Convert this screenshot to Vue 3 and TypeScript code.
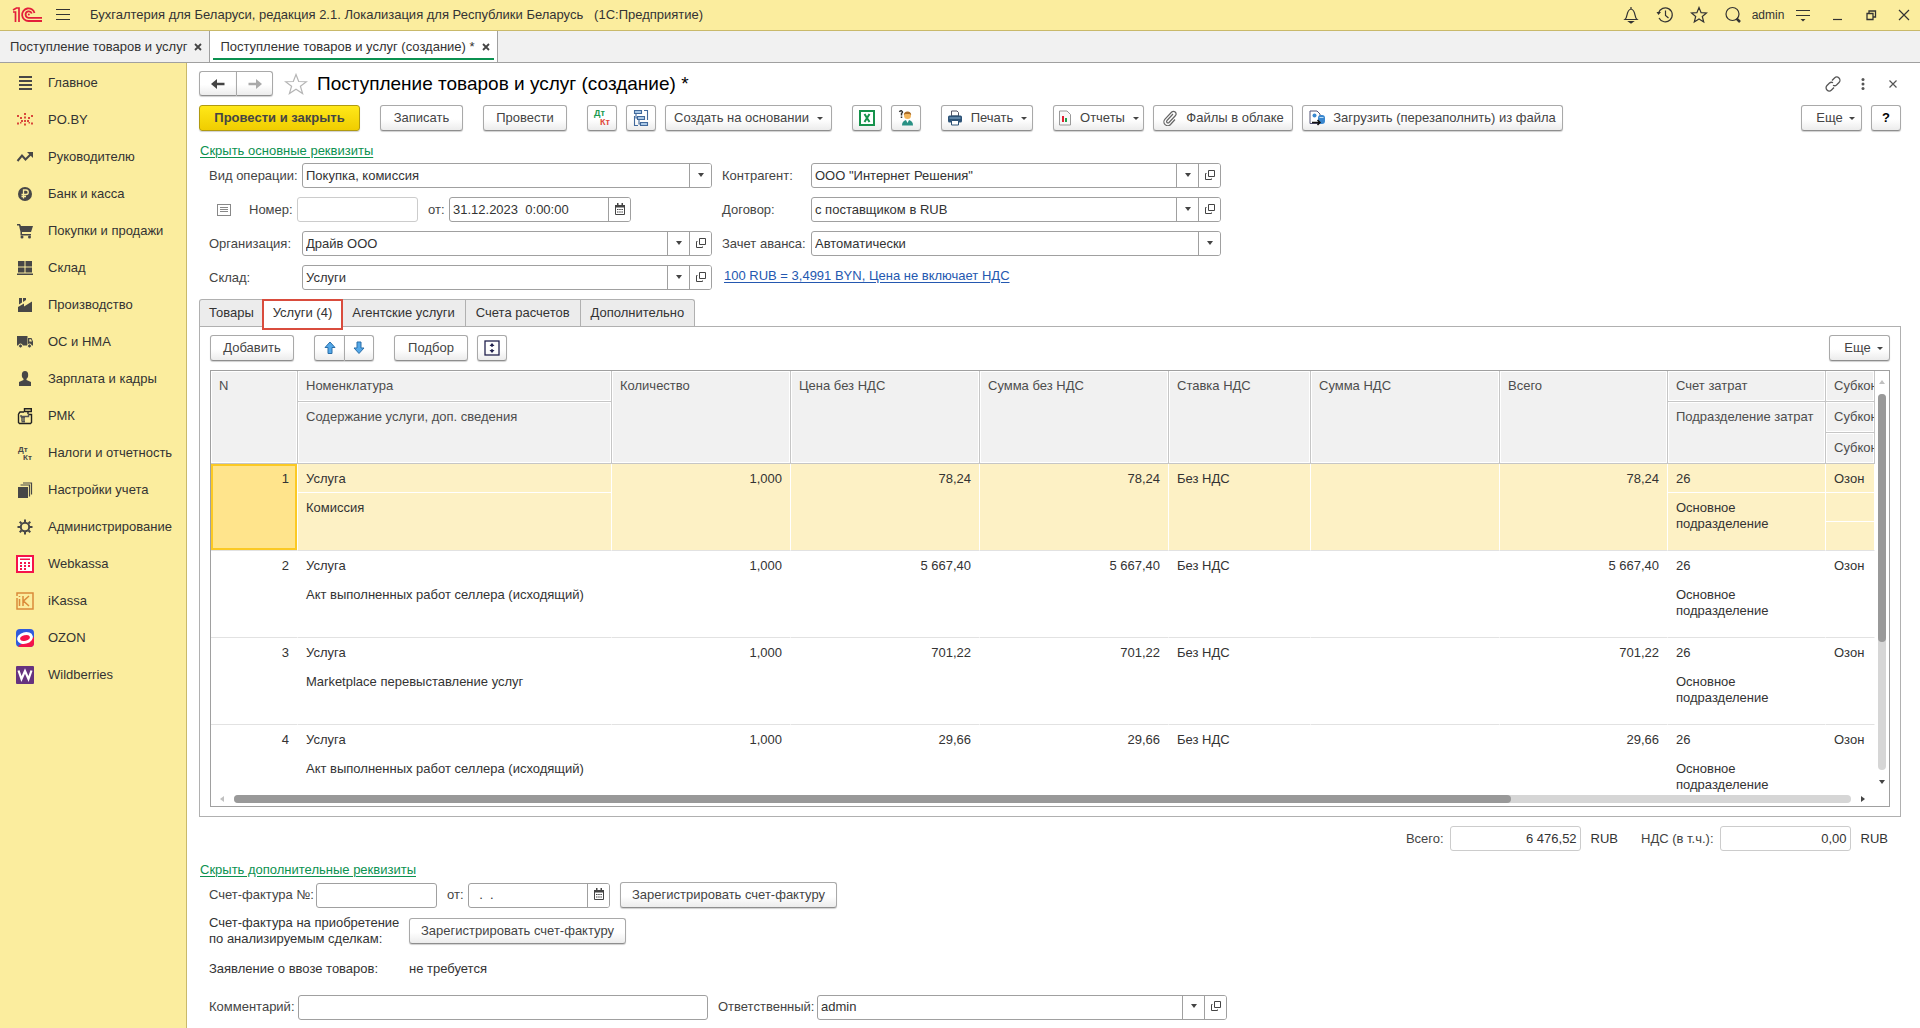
<script setup lang="ts">
import { ref } from 'vue'

interface MenuItem { id: string; text: string }
interface Line {
  n: number; item: string; note: string; qty: string; price: string; sum: string
  rate: string; tax: string; total: string; account: string; unit: string; sub: string
}

const menu: MenuItem[] = [
  { id: 'main', text: 'Главное' },
  { id: 'poby', text: 'PO.BY' },
  { id: 'chart', text: 'Руководителю' },
  { id: 'bank', text: 'Банк и касса' },
  { id: 'cart', text: 'Покупки и продажи' },
  { id: 'store', text: 'Склад' },
  { id: 'factory', text: 'Производство' },
  { id: 'truck', text: 'ОС и НМА' },
  { id: 'person', text: 'Зарплата и кадры' },
  { id: 'rmk', text: 'РМК' },
  { id: 'tax', text: 'Налоги и отчетность' },
  { id: 'books', text: 'Настройки учета' },
  { id: 'gear', text: 'Администрирование' },
  { id: 'webkassa', text: 'Webkassa' },
  { id: 'ikassa', text: 'iKassa' },
  { id: 'ozon', text: 'OZON' },
  { id: 'wb', text: 'Wildberries' },
]

const tabs = ['Товары', 'Услуги (4)', 'Агентские услуги', 'Счета расчетов', 'Дополнительно']
const activeTab = ref(1)
const selected = ref(1)

function line(n: number, note: string, amount: string): Line {
  return {
    n, item: 'Услуга', note, qty: '1,000', price: amount, sum: amount, rate: 'Без НДС',
    tax: '', total: amount, account: '26', unit: 'Основное подразделение', sub: 'Озон',
  }
}
const lines: Line[] = [
  line(1, 'Комиссия', '78,24'),
  line(2, 'Акт выполненных работ селлера (исходящий)', '5 667,40'),
  line(3, 'Marketplace перевыставление услуг', '701,22'),
  line(4, 'Акт выполненных работ селлера (исходящий)', '29,66'),
]
const middleHeads = ['Количество', 'Цена без НДС', 'Сумма без НДС', 'Ставка НДС', 'Сумма НДС', 'Всего']

const form = ref({
  operation: 'Покупка, комиссия',
  number: '',
  date: '31.12.2023  0:00:00',
  org: 'Драйв ООО',
  store: 'Услуги',
  partner: 'ООО "Интернет Решения"',
  contract: 'с поставщиком в RUB',
  advance: 'Автоматически',
  total: '6 476,52',
  vat: '0,00',
  invoice: '',
  invoiceDate: '  .  .',
  comment: '',
  owner: 'admin',
})
</script>

<template>
  <div class="app">
    <header class="titlebar">
      <svg class="logo" width="30" height="18" viewBox="0 0 30 18" fill="none" stroke="#e31e3a" stroke-width="1.800">
        <path d="M1 6H3.500V16M1 4L4.500 2H7V16" stroke-width="1.700" />
        <path d="M22.500 7A6.300 6.300 0 1 0 16.500 15H30M19.800 7.500A3.200 3.200 0 1 0 16.500 11.800H30" />
        <circle cx="16.800" cy="8.500" r="1" fill="#e31e3a" stroke="none" />
      </svg>
      <button class="plain" aria-label="Меню">
        <svg width="16" height="16" viewBox="0 0 16 16" stroke="#333" stroke-width="1.200"><path d="M1 2.500H15M1 7.500H15M1 12.500H15" /></svg>
      </button>
      <span class="apptitle">Бухгалтерия для Беларуси, редакция 2.1. Локализация для Республики Беларусь &nbsp; (1С:Предприятие)</span>
      <div class="tools">
        <button class="plain" aria-label="Уведомления"><svg width="16" height="18" viewBox="0 0 16 18" fill="none" stroke="#333" stroke-width="1.200"><path d="M8 1V3M2 13.500C5 11 3 4 8 3C13 4 11 11 14 13.500Z" /><path d="M6 15.500H10L8 17Z" fill="#333" /></svg></button>
        <button class="plain" aria-label="История"><svg width="18" height="18" viewBox="0 0 18 18" fill="none" stroke="#333" stroke-width="1.200"><path d="M3 12A7 7 0 1 0 2.500 7M9.500 4.500V9.500L12.500 12" /><path d="M.5 6H5L2.500 9Z" fill="#333" stroke="none" /></svg></button>
        <button class="plain" aria-label="Избранное"><svg width="18" height="18" viewBox="0 0 18 18" fill="none" stroke="#333" stroke-width="1.200"><path d="M9 1.500L11.100 6.700L16.500 7L12.300 10.500L13.700 16L9 13L4.300 16L5.700 10.500L1.500 7L6.900 6.700Z" /></svg></button>
        <button class="plain" aria-label="Поиск"><svg width="18" height="18" viewBox="0 0 18 18" fill="none" stroke="#333"><circle cx="8.500" cy="8" r="6.500" stroke-width="1.200" /><path d="M12.500 12.500L16 16" stroke-width="2.500" /></svg></button>
        <span class="user">admin</span>
        <button class="plain" aria-label="Сервис"><svg width="16" height="16" viewBox="0 0 16 16" stroke="#333" stroke-width="1.200"><path d="M1 3.500H15M1 8.500H15" /><path d="M5.500 12H10.500L8 14.500Z" fill="#333" stroke="none" /></svg></button>
        <button class="plain" aria-label="Свернуть"><svg width="12" height="12" viewBox="0 0 12 12" stroke="#333"><path d="M2 10.500H11" stroke-width="1.200" /></svg></button>
        <button class="plain" aria-label="Развернуть"><svg width="12" height="12" viewBox="0 0 12 12" fill="none" stroke="#333" stroke-width="1.300"><path d="M2 4.500H8V10.500H2ZM4 4V2H10.500V8H8.500" /></svg></button>
        <button class="plain close" aria-label="Закрыть"><svg width="12" height="12" viewBox="0 0 12 12" stroke="#333" stroke-width="1.200"><path d="M1 1L11 11M11 1L1 11" /></svg></button>
      </div>
    </header>

    <nav class="windows">
      <div class="wtab"><a href="#list">Поступление товаров и услуг</a><button class="plain" aria-label="Закрыть вкладку"><svg width="8" height="8" viewBox="0 0 8 8" stroke="#444" stroke-width="1.800"><path d="M1 1L7 7M7 1L1 7" /></svg></button></div>
      <div class="wtab current"><a href="#new">Поступление товаров и услуг (создание) *</a><button class="plain" aria-label="Закрыть вкладку"><svg width="8" height="8" viewBox="0 0 8 8" stroke="#444" stroke-width="1.800"><path d="M1 1L7 7M7 1L1 7" /></svg></button></div>
    </nav>

    <div class="body">
      <aside class="sidebar">
        <a v-for="m in menu" :key="m.id" class="mitem" :href="'#' + m.id">
          <svg width="18" height="18" viewBox="0 0 18 18" fill="#474747">
            <path v-if="m.id === 'main'" d="M3 2H16V4H3ZM3 6H16V8H3ZM3 10H16V12H3ZM3 14H16V16H3Z" />
            <path v-else-if="m.id === 'poby'" fill="#d9483b" d="M8 2h2v2H8zM8 5.500h2v2H8zM8 9h2v2H8zM8 12.500h2v2H8zM1 4h2v2H1zM4 6h2v2H4zM12 6h2v2h-2zM15 4h2v2h-2zM5 9h2v2H5zM11 9h2v2h-2zM1 11.500h2v2H1zM4 11h1.500v1.500H4zM12.500 11H14v1.500h-1.500zM15 11.500h2v2h-2z" />
            <g v-else-if="m.id === 'chart'"><path d="M1.500 13L6 7.500L9.500 11.500L14.500 6.500" fill="none" stroke="#474747" stroke-width="2" /><path d="M11 4H17V10Z" /></g>
            <g v-else-if="m.id === 'bank'"><circle cx="9" cy="9" r="7" /><path d="M7.500 13.500V5H10A2.200 2.200 0 0 1 10 9.500H5.500M5.500 11.500H10" fill="none" stroke="#fbed9e" stroke-width="1.300" /></g>
            <g v-else-if="m.id === 'cart'"><path d="M1 2H4L5 4H17L15 10H6L6 12H15V13.500H4.500L4.500 10L3 3.500H1Z" /><circle cx="6" cy="15" r="1.500" /><circle cx="13.500" cy="15" r="1.500" /></g>
            <path v-else-if="m.id === 'store'" d="M2 2H8.500V7.500H2ZM9.500 2H16V7.500H9.500ZM2 8.500H8.500V13.500H2ZM9.500 8.500H16V13.500H9.500ZM1 14.500H17V16H1Z" />
            <path v-else-if="m.id === 'factory'" d="M2 16V11L8 7.500V10.500L16 5.500V16ZM3 2H6V6.500L3 8.500ZM7 2H10V4L7 6Z" />
            <g v-else-if="m.id === 'truck'"><path d="M1 3H11.500V12.500H1ZM12 5H15.500L17 8.500V12.500H12Z" /><path d="M13.300 6.200H15L16 8.500H13.300Z" fill="#fbed9e" /><circle cx="4.500" cy="13" r="2" stroke="#fbed9e" /><circle cx="13.500" cy="13" r="2" stroke="#fbed9e" /></g>
            <g v-else-if="m.id === 'person'"><ellipse cx="9" cy="5" rx="3.200" ry="4" /><path d="M7.500 8H10.500V10L15 12V16H3V12L7.500 10Z" /></g>
            <g v-else-if="m.id === 'rmk'" fill="none" stroke="#222" stroke-width="1.400"><path d="M2.500 7V15.500L3.500 16.500H14.500L15.500 15.500V7.500H13M2.500 7L4 5H8" /><path d="M8.500 1.700H15.300V4.500H8.500ZM12 4.500V7" /><path d="M5 8V9.500H12.500V7M5 11H9M5 13H9M5.500 14.800H9" stroke="#555" /></g>
            <g v-else-if="m.id === 'tax'" font-size="8" font-weight="700" font-family="Liberation Sans, Arial, sans-serif"><text x="2" y="8">Дт</text><text x="7" y="16">Кт</text></g>
            <g v-else-if="m.id === 'books'"><path d="M2 6H12V17H2Z" /><path d="M4.500 4H13.500V15.500M7 2H15.500V13.500" fill="none" stroke="#474747" stroke-width="1.200" /></g>
            <g v-else-if="m.id === 'gear'" fill="none" stroke="#474747"><circle cx="9" cy="9" r="4.200" stroke-width="2" /><path d="M9 1.500V4M9 14V16.500M1.500 9H4M14 9H16.500M3.700 3.700L5.500 5.500M12.500 12.500L14.300 14.300M14.300 3.700L12.500 5.500M5.500 12.500L3.700 14.300" stroke-width="2" /></g>
            <g v-else-if="m.id === 'webkassa'"><path d="M0 0H18V18H0Z" fill="#f5134a" /><path d="M2 2H16V16H2Z" fill="#fff" /><path d="M4 3.500H14V5H4ZM4 7h2v2H4zM8 7h2v2H8zM12 7h2v2h-2zM4 10h2v2H4zM8 10h2v2H8zM12 10h2v2h-2zM4 13h2v2H4zM8 13h2v2H8z" fill="#f5134a" /></g>
            <g v-else-if="m.id === 'ikassa'" fill="none" stroke="#da8b3a" stroke-width="1.500"><path d="M1 4V1H17V17H1V6M3.500 4V5M3.500 7V14M7 4V14M13 4L7.500 9L13 14" /></g>
            <g v-else-if="m.id === 'ozon'"><rect width="18" height="18" rx="4" fill="#2f5bdc" /><path d="M18 8V14A4 4 0 0 1 14 18H4A4 4 0 0 1 2 17Z" fill="#f5134a" /><ellipse cx="9" cy="9" rx="8" ry="5.800" fill="#fff" transform="rotate(-15 9 9)" /><ellipse cx="9" cy="9" rx="5" ry="2.800" fill="#f5134a" transform="rotate(-15 9 9)" /></g>
            <g v-else><rect width="18" height="18" rx="1" fill="#65337f" /><path d="M2.500 4.500L5.500 13L9 5L12.500 13L15.500 4.500" fill="none" stroke="#fff" stroke-width="2.200" /></g>
          </svg>
          <span>{{ m.text }}</span>
        </a>
      </aside>

      <main class="content">
        <div class="head">
          <div class="pair">
            <button class="btn" aria-label="Назад"><svg width="14" height="12" viewBox="0 0 14 12"><path d="M4 6H13.500" stroke="#444" stroke-width="2.500" /><path d="M0 6L6 1V11Z" fill="#444" /></svg></button>
            <button class="btn" aria-label="Вперед"><svg width="14" height="12" viewBox="0 0 14 12"><path d="M.5 6H10" stroke="#aaa" stroke-width="2.500" /><path d="M14 6L8 1V11Z" fill="#aaa" /></svg></button>
          </div>
          <button class="plain star" aria-label="В избранное"><svg width="24" height="22" viewBox="0 0 24 22" fill="none" stroke="#b5b5b5" stroke-width="1.200"><path d="M12 1.500L14.700 8.500L22.500 8.700L16.400 13.300L18.600 20.500L12 16.300L5.400 20.500L7.600 13.300L1.500 8.700L9.300 8.500Z" /></svg></button>
          <h1>Поступление товаров и услуг (создание) *</h1>
          <div class="headtools">
            <button class="plain" aria-label="Ссылка"><svg width="16" height="16" viewBox="0 0 16 16" fill="none" stroke="#555" stroke-width="1.300"><path d="M7 4.500L9.500 2A3 3 0 0 1 14 6.500L11.500 9A3 3 0 0 1 8 9.200M9 11.500L6.500 14A3 3 0 0 1 2 9.500L4.500 7A3 3 0 0 1 8 6.800" /></svg></button>
            <button class="plain" aria-label="Еще"><svg width="16" height="16" viewBox="0 0 16 16" fill="#555"><circle cx="8" cy="3.500" r="1.500" /><circle cx="8" cy="8" r="1.500" /><circle cx="8" cy="12.500" r="1.500" /></svg></button>
            <button class="plain" aria-label="Закрыть форму"><svg width="16" height="16" viewBox="0 0 16 16" stroke="#555" stroke-width="1.200"><path d="M4.500 4.500L11.500 11.500M11.500 4.500L4.500 11.500" /></svg></button>
          </div>
        </div>

        <div class="toolbar">
          <button class="btn main w161">Провести и закрыть</button>
          <button class="btn w83 g20">Записать</button>
          <button class="btn w84 g20">Провести</button>
          <button class="btn w30 g20" aria-label="Дт Кт"><svg width="22" height="20" viewBox="0 0 22 20" font-family="Liberation Sans, Arial, sans-serif" font-size="9" font-weight="700"><text x="3" y="8" fill="#1a9a50">Дт</text><text x="9" y="17" fill="#e04a3a">Кт</text></svg></button>
          <button class="btn w30 g9" aria-label="Структура подчиненности"><svg width="20" height="20" viewBox="0 0 20 20" fill="#a9c8e6" stroke="#41699c" stroke-width="1.100"><path d="M3.500 2.500H10.500V5.500H3.500ZM6.500 8.500H13.500V11.500H6.500ZM9.500 14.500H16.500V17.500H9.500Z" /><path d="M5 5.500V10H6.500M8 11.500V16H9.500M13 2.500H16.500V12M3.500 8V17.500H7" fill="none" /></svg></button>
          <button class="btn w167 g9">Создать на основании<i class="car" /></button>
          <button class="btn w30 g20" aria-label="Excel"><svg width="16" height="16" viewBox="0 0 16 16"><path d="M1 1H15V15H1Z" fill="#fff" stroke="#16924b" stroke-width="2" /><path d="M5.500 4L10.500 12M10.500 4L5.500 12" stroke="#16924b" stroke-width="2" /></svg></button>
          <button class="btn w30 g9" aria-label="Вопрос"><svg width="18" height="18" viewBox="0 0 18 18"><path d="M2.500 3Q3 1.500 4.500 1.800Q6.500 3 4.500 4.500V6.500M4.500 7.500V9" fill="none" stroke="#333" stroke-width="1.500" /><circle cx="10.500" cy="6.500" r="3.500" fill="#f3b55c" /><path d="M6.800 6Q7 2.500 10.500 2.500Q14 2.500 14.200 6L12.500 5H8.500Z" fill="#a66a28" /><path d="M5 16.500Q5 11 10.500 11Q16 11 16 16.500Z" fill="#2a9184" /><path d="M9 11H12L10.500 14Z" fill="#fff" /></svg></button>
          <button class="btn w92 g20"><svg width="16" height="16" viewBox="0 0 16 16"><path d="M4.500 1H10L11.500 2.500V6H4.500Z" fill="#fff" stroke="#556" /><rect x="1" y="5.500" width="14" height="7" rx="1.500" fill="#2d5377" /><path d="M2.500 8H13.500" stroke="#8fb4d6" /><path d="M4.500 10.500H11.500V15H4.500Z" fill="#fff" stroke="#2d5377" /></svg><span>Печать</span><i class="car" /></button>
          <button class="btn w91 g20"><svg width="14" height="16" viewBox="0 0 14 16"><path d="M1.500 1H9L12.500 4.500V15H1.500Z" fill="#f8f8f8" stroke="#999" /><path d="M5 6V12" stroke="#e02030" stroke-width="2" /><path d="M8 8V12" stroke="#22a04c" stroke-width="2" /></svg><span>Отчеты</span><i class="car" /></button>
          <button class="btn w140 g9"><svg width="16" height="16" viewBox="0 0 16 16" fill="none" stroke="#666" stroke-width="1.200"><path d="M11 4L5 10.500A1.300 1.300 0 0 0 7 12.500L13.500 5.500A2.600 2.600 0 0 0 9.700 2L3 9.200A3.800 3.800 0 0 0 8.500 14.500L13 9.500" /></svg><span>Файлы в облаке</span></button>
          <button class="btn w261 g9"><svg width="16" height="16" viewBox="0 0 16 16"><path d="M1 1H8L11 4V13.500H1Z" fill="#fff" stroke="#557" /><rect x="9" y="5" width="7" height="9" rx="3" fill="#3987cf" /><path d="M10.500 7.500H14.500" stroke="#bcdcf5" /><circle cx="5.500" cy="5.500" r="2" fill="#3987cf" /><path d="M3 12.500H11M8.500 10L11 12.500L8.500 15" fill="none" stroke="#111" stroke-width="1.500" /></svg><span>Загрузить (перезаполнить) из файла</span></button>
          <button class="btn more w61 end">Еще<i class="car" /></button>
          <button class="btn w30 g9 q">?</button>
        </div>

        <a class="green" href="#hide-main">Скрыть основные реквизиты</a>

        <div class="fields">
          <div class="col left">
            <div class="frow">
              <label for="f-op" class="l93">Вид операции:</label>
              <span class="box grow"><input id="f-op" v-model="form.operation"><button class="in" aria-label="Выбрать"><i class="tri" /></button></span>
            </div>
            <div class="frow">
              <svg class="form-ic" width="14" height="12" viewBox="0 0 14 12" fill="none" stroke="#888"><rect x=".5" y=".5" width="13" height="11" /><path d="M3 3.500H11M3 5.500H11M3 7.500H11" /></svg>
              <label for="f-num" class="l48">Номер:</label>
              <span class="box pale w121"><input id="f-num" v-model="form.number"></span>
              <label for="f-date" class="from">от:</label>
              <span class="box w182"><input id="f-date" v-model="form.date"><button class="in" aria-label="Календарь"><svg class="op" width="10" height="12" viewBox="0 0 10 12"><path d="M.5 2.500H9.500V11.500H.5Z" fill="none" stroke="#444" /><path d="M0 2H10V4.500H0ZM2 0H3.500V2H2ZM6.500 0H8V2H6.500Z" fill="#444" /><path d="M2 6.500H8M2 9H8" stroke="#444" stroke-dasharray="1.500 .7" stroke-width="1.200" /></svg></button></span>
            </div>
            <div class="frow">
              <label for="f-org" class="l93">Организация:</label>
              <span class="box grow"><input id="f-org" v-model="form.org"><button class="in" aria-label="Выбрать"><i class="tri" /></button><button class="in" aria-label="Открыть"><svg class="op" width="12" height="12" viewBox="0 0 12 12" fill="none" stroke="#444"><path d="M4.500 1.500H10.500V7.500H4.500ZM2.500 4.500H1.500V10.500H7.500V9.500" /></svg></button></span>
            </div>
            <div class="frow">
              <label for="f-store" class="l93">Склад:</label>
              <span class="box grow"><input id="f-store" v-model="form.store"><button class="in" aria-label="Выбрать"><i class="tri" /></button><button class="in" aria-label="Открыть"><svg class="op" width="12" height="12" viewBox="0 0 12 12" fill="none" stroke="#444"><path d="M4.500 1.500H10.500V7.500H4.500ZM2.500 4.500H1.500V10.500H7.500V9.500" /></svg></button></span>
            </div>
          </div>
          <div class="col right">
            <div class="frow">
              <label for="f-partner" class="l89">Контрагент:</label>
              <span class="box grow"><input id="f-partner" v-model="form.partner"><button class="in" aria-label="Выбрать"><i class="tri" /></button><button class="in" aria-label="Открыть"><svg class="op" width="12" height="12" viewBox="0 0 12 12" fill="none" stroke="#444"><path d="M4.500 1.500H10.500V7.500H4.500ZM2.500 4.500H1.500V10.500H7.500V9.500" /></svg></button></span>
            </div>
            <div class="frow">
              <label for="f-contract" class="l89">Договор:</label>
              <span class="box grow"><input id="f-contract" v-model="form.contract"><button class="in" aria-label="Выбрать"><i class="tri" /></button><button class="in" aria-label="Открыть"><svg class="op" width="12" height="12" viewBox="0 0 12 12" fill="none" stroke="#444"><path d="M4.500 1.500H10.500V7.500H4.500ZM2.500 4.500H1.500V10.500H7.500V9.500" /></svg></button></span>
            </div>
            <div class="frow">
              <label for="f-adv" class="l89">Зачет аванса:</label>
              <span class="box grow"><input id="f-adv" v-model="form.advance"><button class="in" aria-label="Выбрать"><i class="tri" /></button></span>
            </div>
            <div class="frow rate"><a class="blue" href="#rate">100 RUB = 3,4991 BYN, Цена не включает НДС</a></div>
          </div>
        </div>

        <div class="tabs" role="tablist">
          <button v-for="(t, i) in tabs" :key="t" role="tab" :aria-selected="i === activeTab" :class="{ active: i === activeTab }" @click="activeTab = i">{{ t }}</button>
        </div>

        <section class="panel">
          <div class="ptools">
            <button class="btn w84">Добавить</button>
            <div class="pair arrows g20">
              <button class="btn" aria-label="Вверх"><svg width="12" height="14" viewBox="0 0 12 14"><path d="M6 1L11 6.500H8V12.500H4V6.500H1Z" fill="#54a8e8" stroke="#2b6ea8" /></svg></button>
              <button class="btn" aria-label="Вниз"><svg width="12" height="14" viewBox="0 0 12 14"><path d="M6 12.500L11 7H8V1H4V7H1Z" fill="#54a8e8" stroke="#2b6ea8" /></svg></button>
            </div>
            <button class="btn w74 g20">Подбор</button>
            <button class="btn w30 g9" aria-label="Высота строк"><svg width="16" height="16" viewBox="0 0 16 16" fill="none" stroke="#22224f"><rect x="1" y="1" width="14" height="14" stroke-width="1.300" /><path d="M8 4V7M8 9V12" stroke-width="1.300" /><path d="M5.500 6L8 3L10.500 6ZM5.500 10L8 13L10.500 10Z" fill="#22224f" stroke="none" /></svg></button>
            <button class="btn more w61 end">Еще<i class="car" /></button>
          </div>

          <div class="grid">
            <div class="view">
              <table>
                <colgroup><col class="c1"><col class="c2"><col class="c3"><col class="c4"><col class="c4"><col class="c6"><col class="c4"><col class="c8"><col class="c9"><col></colgroup>
                <thead>
                  <tr>
                    <th rowspan="3">N</th><th>Номенклатура</th>
                    <th v-for="h in middleHeads" :key="h" rowspan="3">{{ h }}</th>
                    <th>Счет затрат</th><th>Субконто 1</th>
                  </tr>
                  <tr><th rowspan="2">Содержание услуги, доп. сведения</th><th rowspan="2">Подразделение затрат</th><th>Субконто 2</th></tr>
                  <tr><th>Субконто 3</th></tr>
                </thead>
                <tbody v-for="r in lines" :key="r.n" :class="{ sel: r.n === selected }" @click="selected = r.n">
                  <tr>
                    <td rowspan="3" class="num last first">{{ r.n }}</td>
                    <td>{{ r.item }}</td>
                    <td rowspan="3" class="num last">{{ r.qty }}</td>
                    <td rowspan="3" class="num last">{{ r.price }}</td>
                    <td rowspan="3" class="num last">{{ r.sum }}</td>
                    <td rowspan="3" class="last">{{ r.rate }}</td>
                    <td rowspan="3" class="num last">{{ r.tax }}</td>
                    <td rowspan="3" class="num last">{{ r.total }}</td>
                    <td>{{ r.account }}</td>
                    <td>{{ r.sub }}</td>
                  </tr>
                  <tr><td rowspan="2" class="last">{{ r.note }}</td><td rowspan="2" class="last wrap">{{ r.unit }}</td><td /></tr>
                  <tr><td class="last" /></tr>
                </tbody>
              </table>
            </div>
            <div class="vbar"><i class="up" /><div class="track"><div class="thumb" /></div><i class="down" /></div>
            <div class="hbar"><i class="lt" /><div class="track"><div class="thumb" /></div><i class="rt" /></div>
          </div>
        </section>

        <div class="totals">
          <label for="f-total">Всего:</label>
          <span class="box pale w131"><input id="f-total" v-model="form.total" class="r"></span>
          <span class="cur">RUB</span>
          <label for="f-vat">НДС (в т.ч.):</label>
          <span class="box pale w131"><input id="f-vat" v-model="form.vat" class="r"></span>
          <span class="cur">RUB</span>
        </div>

        <a class="green second" href="#hide-extra">Скрыть дополнительные реквизиты</a>

        <div class="extra">
          <div class="xrow">
            <label for="f-inv" class="l107">Счет-фактура №:</label>
            <span class="box w121"><input id="f-inv" v-model="form.invoice"></span>
            <label for="f-invd" class="from">от:</label>
            <span class="box w142"><input id="f-invd" v-model="form.invoiceDate"><button class="in" aria-label="Календарь"><svg class="op" width="10" height="12" viewBox="0 0 10 12"><path d="M.5 2.500H9.500V11.500H.5Z" fill="none" stroke="#444" /><path d="M0 2H10V4.500H0ZM2 0H3.500V2H2ZM6.500 0H8V2H6.500Z" fill="#444" /><path d="M2 6.500H8M2 9H8" stroke="#444" stroke-dasharray="1.500 .7" stroke-width="1.200" /></svg></button></span>
            <button class="btn w217 g10">Зарегистрировать счет-фактуру</button>
          </div>
          <div class="xrow two">
            <span class="l200">Счет-фактура на приобретение<br>по анализируемым сделкам:</span>
            <button class="btn w217">Зарегистрировать счет-фактуру</button>
          </div>
          <div class="xrow three"><span class="l200">Заявление о ввозе товаров:</span><span>не требуется</span></div>
          <div class="xrow">
            <label for="f-com" class="l89">Комментарий:</label>
            <span class="box w410"><input id="f-com" v-model="form.comment"></span>
            <label for="f-own" class="own">Ответственный:</label>
            <span class="box w410"><input id="f-own" v-model="form.owner"><button class="in" aria-label="Выбрать"><i class="tri" /></button><button class="in" aria-label="Открыть"><svg class="op" width="12" height="12" viewBox="0 0 12 12" fill="none" stroke="#444"><path d="M4.500 1.500H10.500V7.500H4.500ZM2.500 4.500H1.500V10.500H7.500V9.500" /></svg></button></span>
          </div>
        </div>
      </main>
    </div>
  </div>
</template>

<style>
html, body, #app { height: 100%; }
body { margin: 0; overflow: hidden; background: #fff; }
</style>

<style scoped>
.app { display: flex; flex-direction: column; min-height: 100%; font: 13px/16px "Liberation Sans", Arial, sans-serif; color: #333; background: #fff; }
.app *, .app *::before { box-sizing: border-box; }
button, input { font: inherit; color: inherit; margin: 0; }
button { cursor: pointer; }
.plain { display: flex; align-items: center; justify-content: center; padding: 0; border: 0; background: none; }
svg { flex: none; display: block; }
i { display: block; flex: none; }

.titlebar { display: flex; align-items: center; height: 31px; padding-left: 12px; background: #fbed9e; border-bottom: 1px solid #c9b96a; }
.titlebar .logo { margin-right: 13px; }
.apptitle { margin-left: 19px; white-space: nowrap; }
.tools { display: flex; align-items: center; margin-left: auto; }
.tools .plain { width: 34px; height: 30px; }
.tools .close { width: 32px; }
.user { width: 36px; font-size: 12px; text-align: center; }

.windows { display: flex; height: 32px; background: #f1f1f1; border-bottom: 1px solid #a0a0a0; }
.wtab { display: flex; align-items: center; gap: 6px; padding: 0 6px 0 10px; border-right: 1px solid #a0a0a0; }
.wtab a { color: inherit; text-decoration: none; white-space: nowrap; }
.wtab .plain { width: 10px; height: 16px; }
.wtab.current { position: relative; background: #fff; }
.wtab.current::before { content: ""; position: absolute; left: 3px; right: 3px; bottom: 2px; height: 2px; background: #0b9150; }

.body { display: flex; flex: 1; align-items: stretch; }
.sidebar { flex: none; width: 187px; padding-top: 1px; background: #fbed9e; border-right: 1px solid #c9b96a; }
.mitem { display: flex; align-items: center; gap: 14px; height: 37px; padding-left: 16px; color: #333; text-decoration: none; white-space: nowrap; }

.content { flex: 1; min-width: 0; padding: 8px 19px 8px 12px; }
.head { display: flex; align-items: center; height: 25px; }
h1 { margin: 0 0 0 9px; font-size: 19px; line-height: 24px; font-weight: 400; color: #000; white-space: nowrap; }
.star { margin-left: 11px; }
.headtools { display: flex; gap: 14px; margin-left: auto; }
.pair { display: flex; }
.pair .btn { width: 37px; height: 25px; }
.pair .btn:first-child { border-radius: 3px 0 0 3px; border-right: 0; }
.pair .btn:last-child { border-radius: 0 3px 3px 0; }
.pair.arrows .btn { width: 30px; height: 26px; }

.btn { display: flex; flex: none; align-items: center; justify-content: center; gap: 8px; height: 26px; padding: 0; border: 1px solid #a9a9a9; border-bottom-color: #8e8e8e; border-radius: 3px; background: linear-gradient(#fff 55%, #ececec); box-shadow: 0 1px 1px #d0d0d0; color: #444; white-space: nowrap; }
.btn.main { background: linear-gradient(#ffe819, #f0cd00); border-color: #b09a10; font-weight: 700; }
.btn.more { gap: 6px; padding-left: 8px; }
.q { color: #000; font-weight: 700; }
.car { border: 3px solid transparent; border-top-color: #444; border-bottom: 0; }
.toolbar { display: flex; margin-top: 9px; }
.end { margin-left: auto; }
.g9 { margin-left: 9px; }
.g10 { margin-left: 10px; }
.g20 { margin-left: 20px; }
.w30 { width: 30px; } .w61 { width: 61px; } .w74 { width: 74px; } .w83 { width: 83px; } .w84 { width: 84px; } .w91 { width: 91px; } .w92 { width: 92px; }
.w121 { width: 121px; } .w131 { width: 131px; } .w140 { width: 140px; } .w142 { width: 142px; } .w161 { width: 161px; }
.w167 { width: 167px; } .w182 { width: 182px; } .w217 { width: 217px; } .w261 { width: 261px; } .w410 { width: 410px; }

.green { display: block; width: max-content; margin: 12px 0 0 1px; color: #0b9150; text-underline-offset: 2px; }
.green.second { margin-top: 11px; }
.blue { color: #2458b0; text-underline-offset: 2px; }

.fields { display: flex; gap: 10px; margin-top: 4px; padding-left: 10px; }
.col { display: flex; flex-direction: column; gap: 9px; }
.left { width: 503px; }
.right { width: 499px; }
.frow { display: flex; align-items: center; height: 25px; }
.rate { padding: 0 0 4px 2px; }
label { flex: none; color: #444; white-space: nowrap; }
.l93 { width: 93px; } .l48 { width: 48px; } .l89 { width: 89px; } .l107 { width: 107px; } .l200 { width: 200px; flex: none; }
.form-ic { margin: 0 18px 0 8px; }
.from { width: 31px; padding-left: 10px; }
.box { display: flex; flex: none; height: 25px; border: 1px solid #a0a0a0; border-radius: 3px; background: #fff; overflow: hidden; }
.box.grow { flex: 1; min-width: 0; }
.box.pale { border-color: #ccc; }
.box input { flex: 1; min-width: 0; width: 0; padding: 0 3px; border: 0; outline: 0; background: none; white-space: pre; }
.box input.r { text-align: right; }
.in { display: flex; flex: none; align-items: center; justify-content: center; width: 22px; padding: 0 0 2px; border: 0; border-left: 1px solid #a0a0a0; background: #fff; }
.tri { border: 3px solid transparent; border-top: 4px solid #444; border-bottom: 0; }

.tabs { display: flex; margin-top: 9px; height: 27px; }
.tabs button { padding: 0 10px; border: 1px solid #b0b0b0; border-left-width: 0; border-bottom: 0; background: #ececec; white-space: nowrap; }
.tabs button:first-child { padding: 0 9px; border-left-width: 1px; border-radius: 3px 0 0 0; }
.tabs button:last-child { border-radius: 0 3px 0 0; }
.tabs .active { position: relative; height: 31px; margin: 0 -1px 0 -2px; padding: 0 9px 3px; border: 2px solid #d94c3d; background: #fff; }
.panel { padding: 8px 10px 9px; border: 1px solid #b0b0b0; }
.ptools { display: flex; }

.grid { display: grid; grid-template-columns: minmax(0, 1fr) 14px; grid-template-rows: 421px 14px; margin-top: 9px; border: 1px solid #a0a0a0; }
.view { overflow: hidden; }
table { width: 100%; table-layout: fixed; border-collapse: separate; border-spacing: 0; }
.c1 { width: 87px; } .c2 { width: 314px; } .c3 { width: 179px; } .c4 { width: 189px; } .c6 { width: 142px; } .c8 { width: 168px; } .c9 { width: 158px; }
th, td { height: 29px; padding: 7px 8px 0; text-align: left; vertical-align: top; font-weight: 400; line-height: 16px; white-space: nowrap; overflow: hidden; }
th { height: 31px; background: #f1f1f1; border: solid #c6c6c6; border-width: 0 1px 1px 0; box-shadow: inset 0 0 0 1px #fff; color: #4d4d4d; }
td { border: solid #fff; border-width: 0 1px 1px 0; }
td.last { border-bottom-color: #e2e2e2; }
td.num { text-align: right; }
td.wrap { white-space: normal; }
th:last-child, td:last-child { padding-right: 0; }
.sel td { background: #fdf1c5; }
.sel td.first { background: #ffe48c; box-shadow: inset 0 0 0 2px #fbc924; }

.vbar { display: flex; flex-direction: column; align-items: center; padding: 9px 3px 8px; }
.vbar .track { flex: 1; width: 8px; margin: 10px 0; border-radius: 4px; background: #d6d6d6; }
.vbar .thumb { width: 8px; height: 66%; border-radius: 4px; background: #999; }
.hbar { grid-column: 1 / 3; display: flex; align-items: center; padding: 0 24px 0 9px; }
.hbar .track { flex: 1; height: 8px; margin: 0 10px; border-radius: 4px; background: #d6d6d6; }
.hbar .thumb { width: 79%; height: 8px; border-radius: 4px; background: #999; }
.up { border: 3px solid transparent; border-bottom: 4px solid #c0c0c0; border-top: 0; }
.down { border: 3px solid transparent; border-top: 4px solid #444; border-bottom: 0; }
.lt { border: 3px solid transparent; border-right: 4px solid #c0c0c0; border-left: 0; }
.rt { border: 3px solid transparent; border-left: 4px solid #444; border-right: 0; }

.totals { display: flex; align-items: center; justify-content: flex-end; margin-top: 9px; padding-right: 13px; }
.totals label { margin-right: 6px; }
.cur { margin-left: 10px; }
.cur + label { margin-left: 23px; }

.extra { display: flex; flex-direction: column; padding: 4px 0 0 10px; }
.xrow { display: flex; align-items: center; height: 26px; }
.xrow.two { height: 32px; margin-top: 7px; }
.xrow.three { height: 16px; margin: 14px 0 17px; }
.own { width: 109px; padding-left: 10px; }
</style>
